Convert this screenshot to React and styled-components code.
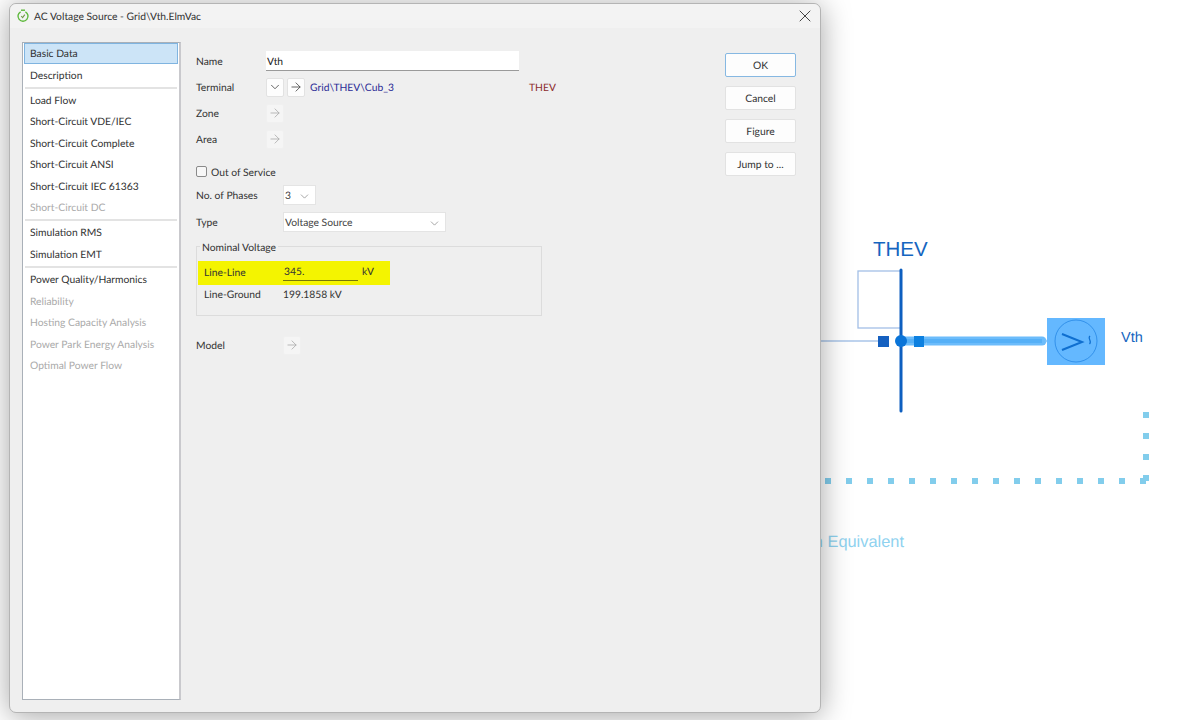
import React from 'react';
import styled, { createGlobalStyle } from 'styled-components';
import { ArrowRight, ChevronDown, X } from 'lucide-react';

const GlobalStyle = createGlobalStyle`
  * { box-sizing: border-box; }
  html, body { margin: 0; background: #fff; }
  body {
    font-family: Lato, "Open Sans", sans-serif;
    font-size: 10.3px;
    line-height: 14px;
    color: #333;
    text-rendering: geometricPrecision;
  }
`;

const Page = styled.div`
  position: relative;
  width: 1202px;
  height: 720px;
  padding: 3px 0 0 9px;
  overflow: hidden;
  background: #fff;
`;

const Diagram = styled.svg`
  position: absolute;
  left: 0;
  top: 0;
`;

const DialogWindow = styled.div`
  position: relative;
  width: 812px;
  height: 710px;
  background: #efefef;
  border: 1px solid #b4b4b4;
  border-radius: 7px;
  box-shadow: 0 3px 30px rgba(0, 0, 0, 0.36);
`;

const TitleBar = styled.div`
  display: flex;
  align-items: center;
  height: 24px;
  padding: 0 5px 0 6px;
  background: #f3f3f3;
  border-radius: 7px 7px 0 0;
`;

const Title = styled.span`
  margin-left: 4px;
  padding-top: 2px;
  flex: 1;
  color: #333;
`;

const Body = styled.div`
  display: flex;
  padding: 14px 0 0 12px;
`;

const Sidebar = styled.div`
  width: 159px;
  height: 658px;
  padding: 0 1px;
  background: #fff;
  border: 1px solid #a9b0b8;
  border-right: 2px solid #c9c9cd;
`;

const NavItem = styled.div`
  display: flex;
  align-items: center;
  height: 21.4px;
  padding: 1px 0 0 6px;
  color: ${(p) => (p.$disabled ? '#aaa' : '#333')};
  ${(p) => p.$active && `
    background: #cce4f7;
    box-shadow: inset 0 0 0 1px #7fb4e0;
  `}
`;

const NavDivider = styled.div`
  height: 2px;
  margin: 1.2px 1px 0.9px;
  background: #e3e3e3;
`;

const Form = styled.div`
  width: 529px;
  margin-left: 15px;
  padding-top: 9px;
`;

const Row = styled.div`
  display: flex;
  align-items: center;
  height: 20px;
  margin-top: ${(p) => p.$top || 0}px;
`;

const Label = styled.span`
  flex: none;
  width: ${(p) => p.$width || 70}px;
  padding-top: 2px;
`;

const TextInput = styled.div`
  display: flex;
  align-items: center;
  width: ${(p) => p.$width}px;
  height: 20px;
  padding: 2px 0 0 1px;
  background: #fff;
  border-bottom: 1px solid #9a9a9a;
  color: #222;
`;

const IconButton = styled.div`
  display: flex;
  align-items: center;
  justify-content: center;
  width: 18px;
  height: 19px;
  margin-right: 3px;
  background: ${(p) => (p.$disabled ? '#f5f5f5' : '#fdfdfd')};
  border: 1px solid ${(p) => (p.$disabled ? '#f0f0f0' : '#e2e2e2')};
  border-radius: 2px;
  color: ${(p) => (p.$disabled ? '#aaa' : '#444')};
`;

const TerminalLink = styled.span`
  width: 219px;
  margin-left: 2px;
  padding-top: 2px;
  color: #2c2c96;
`;

const TerminalName = styled.span`
  padding-top: 2px;
  color: #8c2c2c;
`;

const CheckBox = styled.span`
  width: 11px;
  height: 11px;
  margin: 0 4px 1px 0;
  border: 1px solid #8a8a8a;
  border-radius: 2px;
  background: #f7f7f7;
`;

const Select = styled.div`
  display: flex;
  align-items: center;
  justify-content: space-between;
  width: ${(p) => p.$width}px;
  height: 20px;
  padding: 2px 4px 0 1px;
  background: #fff;
  border: 1px solid #e4e4e4;
  color: #444;
`;

const Group = styled.div`
  position: relative;
  width: 346px;
  height: 70px;
  margin-top: 14px;
  padding: 14px 0 0 1px;
  border: 1px solid #dcdcdc;
`;

const GroupTitle = styled.span`
  position: absolute;
  left: 3px;
  top: -6px;
  padding: 0 2px;
  background: #efefef;
`;

const HighlightRow = styled.div`
  display: flex;
  align-items: center;
  width: 192px;
  height: 24px;
  padding: 0 0 2px 6px;
  background: #f4f400;
`;

const PlainRow = styled.div`
  display: flex;
  align-items: center;
  height: 18px;
  padding-left: 6px;
`;

const VoltageInput = styled.div`
  display: flex;
  align-items: center;
  width: 75px;
  height: 18px;
  margin-right: 4px;
  padding-left: 1px;
  border-bottom: 1px solid #77770a;
`;

const Actions = styled.div`
  display: flex;
  flex-direction: column;
  gap: 9px;
  width: 71px;
  margin-top: 11px;
`;

const ActionButton = styled.div`
  display: flex;
  align-items: center;
  justify-content: center;
  height: 24px;
  padding-top: 2px;
  background: #fdfdfd;
  border: 1px solid ${(p) => (p.$primary ? '#86b8e2' : '#e2e2e2')};
  border-radius: 2px;
  color: #333;
`;

const navGroups = [
  [['Basic Data', false, true], ['Description']],
  [['Load Flow'], ['Short-Circuit VDE/IEC'], ['Short-Circuit Complete'], ['Short-Circuit ANSI'], ['Short-Circuit IEC 61363'], ['Short-Circuit DC', true]],
  [['Simulation RMS'], ['Simulation EMT']],
  [['Power Quality/Harmonics'], ['Reliability', true], ['Hosting Capacity Analysis', true], ['Power Park Energy Analysis', true], ['Optimal Power Flow', true]],
];

const AppIcon = () => (
  <svg width="14" height="14" viewBox="0 0 14 14" fill="none" stroke="#5cb83a" strokeWidth="1.4">
    <path d="M4.6 2.8a5 5 0 1 0 4.8 0" />
    <path d="M5 1.2h4" />
    <path d="M5.2 7l1.4 1.6 2.2-3" stroke="#6f9a45" strokeWidth="1.1" />
  </svg>
);

const Arrow = () => <ArrowRight size={14} strokeWidth={1.4} />;

const DiagramLayer = () => (
  <Diagram width="1202" height="720" viewBox="0 0 1202 720" fill="none">
    <text x="873" y="256" fontFamily="Liberation Sans" fontSize="20.5" fill="#1565c0">THEV</text>
    <rect x="858" y="271" width="43" height="57" stroke="#a3bfe6" strokeWidth="1.3" />
    <path d="M800 341H884" stroke="#a8c4e8" strokeWidth="1.3" />
    <path d="M905 341H1042" stroke="#6cbcfb" strokeWidth="9" strokeLinecap="round" />
    <path d="M905 341H1042" stroke="#55b0f7" strokeWidth="4" />
    <path d="M1045 341H1056" stroke="#7cc0f8" strokeWidth="1.3" />
    <path d="M901 270V411" stroke="#0e5fc0" strokeWidth="3" strokeLinecap="round" />
    <rect x="878" y="336" width="11" height="11" fill="#1560c0" />
    <circle cx="901" cy="341" r="6" fill="#0a74d8" />
    <rect x="914" y="336" width="10" height="11" fill="#0d80e0" />
    <rect x="1047" y="318" width="58" height="47" fill="#64b8ff" />
    <circle cx="1076" cy="341" r="21" stroke="#2d8ce8" strokeWidth="0.9" />
    <path d="M1062 334L1082 342L1062 350" stroke="#0f6fd0" strokeWidth="2" />
    <path d="M1090 336c-3 2.5 2.5 5 -0.5 8" stroke="#0f6fd0" strokeWidth="1.2" />
    <text x="1121" y="342" fontFamily="Liberation Sans" fontSize="14.5" fill="#1565c0">Vth</text>
    <path d="M825 481H1147" stroke="#82cdec" strokeWidth="6" strokeDasharray="6 15" />
    <path d="M1146 412V481" stroke="#82cdec" strokeWidth="6" strokeDasharray="6 15" />
    <text x="904" y="547" textAnchor="end" fontFamily="Liberation Sans" fontSize="16.4" fill="#8fd2ef">Thevenin Equivalent</text>
  </Diagram>
);

export default function App() {
  return (
    <Page>
      <GlobalStyle />
      <DiagramLayer />
      <DialogWindow>
        <TitleBar>
          <AppIcon />
          <Title>AC Voltage Source - Grid\Vth.ElmVac</Title>
          <X size={20} strokeWidth={1.1} color="#333" />
        </TitleBar>
        <Body>
          <Sidebar>
            {navGroups.map((group, i) => (
              <React.Fragment key={i}>
                {i > 0 && <NavDivider />}
                {group.map(([name, disabled, active]) => (
                  <NavItem key={name} $disabled={disabled} $active={active}>{name}</NavItem>
                ))}
              </React.Fragment>
            ))}
          </Sidebar>
          <Form>
            <Row>
              <Label>Name</Label>
              <TextInput $width={253}>Vth</TextInput>
            </Row>
            <Row $top={6}>
              <Label>Terminal</Label>
              <IconButton><ChevronDown size={14} strokeWidth={1.4} /></IconButton>
              <IconButton><Arrow /></IconButton>
              <TerminalLink>Grid\THEV\Cub_3</TerminalLink>
              <TerminalName>THEV</TerminalName>
            </Row>
            <Row $top={6}>
              <Label>Zone</Label>
              <IconButton $disabled><Arrow /></IconButton>
            </Row>
            <Row $top={6}>
              <Label>Area</Label>
              <IconButton $disabled><Arrow /></IconButton>
            </Row>
            <Row $top={13}>
              <CheckBox />
              <Label $width={100}>Out of Service</Label>
            </Row>
            <Row $top={3}>
              <Label $width={87}>No. of Phases</Label>
              <Select $width={33}>3<ChevronDown size={13} strokeWidth={1.2} color="#777" /></Select>
            </Row>
            <Row $top={7}>
              <Label $width={87}>Type</Label>
              <Select $width={163}>Voltage Source<ChevronDown size={13} strokeWidth={1.2} color="#777" /></Select>
            </Row>
            <Group>
              <GroupTitle>Nominal Voltage</GroupTitle>
              <HighlightRow>
                <Label $width={79}>Line-Line</Label>
                <VoltageInput>345.</VoltageInput>
                <span>kV</span>
              </HighlightRow>
              <PlainRow>
                <Label $width={79}>Line-Ground</Label>
                <Label $width={80}>199.1858 kV</Label>
              </PlainRow>
            </Group>
            <Row $top={19}>
              <Label $width={87}>Model</Label>
              <IconButton $disabled><Arrow /></IconButton>
            </Row>
          </Form>
          <Actions>
            <ActionButton $primary>OK</ActionButton>
            <ActionButton>Cancel</ActionButton>
            <ActionButton>Figure</ActionButton>
            <ActionButton>Jump to ...</ActionButton>
          </Actions>
        </Body>
      </DialogWindow>
    </Page>
  );
}
